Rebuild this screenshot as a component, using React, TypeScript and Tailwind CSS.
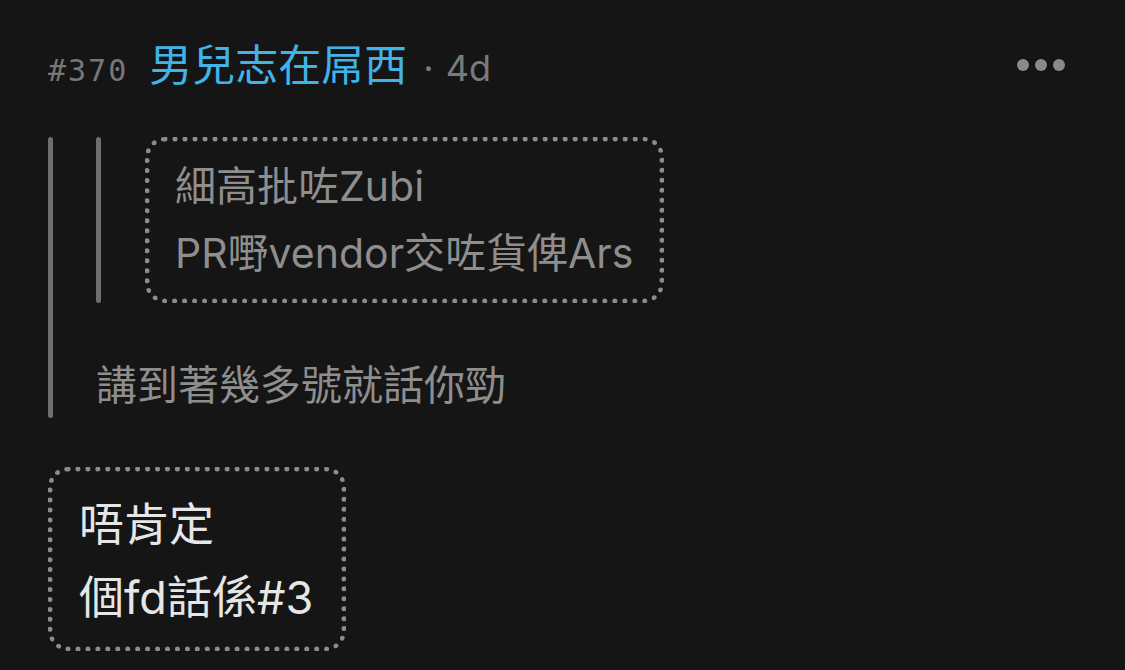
/**
 * 回覆帖子
 */

const sans = "font-['Inter','Noto_Sans_CJK_TC','Noto_Sans_CJK_SC',sans-serif]";

export default function App() {
  return (
    <div className={`min-h-screen bg-[#151515] pl-[48px] pr-[60px] pt-[35px] ${sans}`}>
      {/* 標題列 */}
      <div className="flex items-center justify-between h-[60px]">
        <div className="flex items-baseline">
          <span className="font-['DejaVu_Sans_Mono',monospace] text-[30px] tracking-[2px] text-[#777777]">#370</span>
          <span className="ml-[21px] text-[43px] text-[#41b3e8]">男兒志在屌西</span>
          <span className="ml-[16px] text-[36px] text-[#7a7a7a]">·</span>
          <span className="ml-[12px] text-[36px] text-[#7a7a7a]">4d</span>
        </div>
        <div className="flex gap-[6px]">
          <div className="w-[12px] h-[12px] rounded-full bg-[#8a8a8a]" />
          <div className="w-[12px] h-[12px] rounded-full bg-[#8a8a8a]" />
          <div className="w-[12px] h-[12px] rounded-full bg-[#8a8a8a]" />
        </div>
      </div>

      {/* 引用 */}
      <div className="mt-[42px] flex gap-[43px]">
        <div className="w-[5px] rounded-full bg-[#6e6e6e]" />
        <div className="flex flex-col">
          <div className="flex gap-[44px]">
            <div className="w-[5px] rounded-full bg-[#6e6e6e]" />
            <div className="border-[5px] border-dotted border-[#8c8c8c] rounded-[20px] pl-[25px] pr-[26px] pt-[11px] pb-[11px] text-[41px] leading-[67px] text-[#8e8e8e]">
              <div>細高批咗Zubi</div>
              <div>PR嘢vendor交咗貨俾Ars</div>
            </div>
          </div>
          <div className="mt-[49px] text-[41px] leading-[66px] text-[#8e8e8e]">講到著幾多號就話你勁</div>
        </div>
      </div>

      {/* 內文 */}
      <div className="mt-[49px] inline-block border-[5px] border-dotted border-[#8c8c8c] rounded-[20px] pl-[26px] pr-[28px] pt-[16px] pb-[12px] text-[45px] leading-[73px] text-[#e6e6e6]">
        <div>唔肯定</div>
        <div>個fd話係#3</div>
      </div>
    </div>
  );
}
